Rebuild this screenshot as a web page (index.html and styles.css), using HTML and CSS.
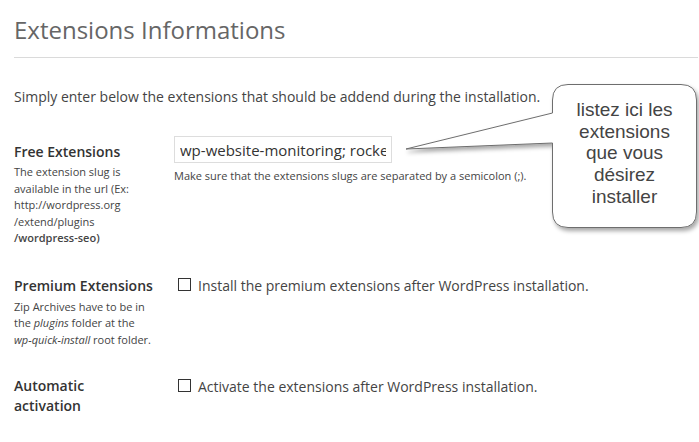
FILE: index.html
```html
<!DOCTYPE html>
<html lang="en">
<head>
<meta charset="UTF-8">
<meta name="viewport" content="width=device-width, initial-scale=1.0">
<title>Extensions Informations</title>
<link rel="stylesheet" href="styles.css">
</head>
<body>

<div class="page">
  <h1 class="title">Extensions Informations</h1>
  <p class="intro">Simply enter below the extensions that should be addend during the installation.</p>

  <div class="field-row">
    <div class="field-label">
      <label for="plugins">Free Extensions</label>
      <p class="desc">The extension slug is available in the url (Ex: http://wordpress.org /extend/plugins <strong class="nowrap">/wordpress-seo)</strong></p>
    </div>
    <div class="field-control">
      <input id="plugins" class="text-input" type="text" value="wp-website-monitoring; rocket-lazy-load">
      <p class="help">Make sure that the extensions slugs are separated by a semicolon (;).</p>
    </div>
  </div>

  <div class="field-row">
    <div class="field-label">
      <label>Premium Extensions</label>
      <p class="desc desc-spaced">Zip Archives have to be in the <em>plugins</em> folder at the <em class="nowrap">wp-quick-install</em> root folder.</p>
    </div>
    <div class="field-control check-control">
      <label class="check"><span class="box"></span>Install the premium extensions after WordPress installation.</label>
    </div>
  </div>

  <div class="field-row">
    <div class="field-label">
      <label class="narrow">Automatic activation</label>
    </div>
    <div class="field-control check-control">
      <label class="check"><span class="box"></span>Activate the extensions after WordPress installation.</label>
    </div>
  </div>

  <!-- bulle d'annotation posée sur la capture -->
  <div class="callout">
    <svg width="299" height="160" viewBox="0 0 299 160">
      <defs>
        <filter id="shadow" x="-10%" y="-10%" width="130%" height="130%">
          <feDropShadow dx="2" dy="3" stdDeviation="2" flood-color="#000" flood-opacity="0.35"/>
        </filter>
      </defs>
      <path d="M168 4.5 H281 Q296.5 4.5 296.5 20 V132 Q296.5 147.5 281 147.5 H168 Q152.5 147.5 152.5 132 V63 L6 69 L152.5 33 V20 Q152.5 4.5 168 4.5 Z"
            fill="#fff" stroke="#6e6e6e" stroke-width="1" filter="url(#shadow)"/>
    </svg>
    <div class="callout-text">listez ici les<br>extensions<br>que vous<br>désirez<br>installer</div>
  </div>
</div>

</body>
</html>
```

FILE: styles.css
```css
body {
  margin: 0;
  background: #fff;
  font-family: "Open Sans", sans-serif;
  color: #444;
}
.page {
  position: relative;
  padding: 0 1px 0 14px;
}
.title {
  margin: 0;
  padding: 14px 0 11px;
  font-size: 24px;
  font-weight: 400;
  line-height: 32px;
  color: #666;
  border-bottom: 1px solid #dadada;
}
.intro {
  margin: 28px 0 29px;
  font-size: 14px;
  line-height: 21px;
}
.field-row {
  display: grid;
  grid-template-columns: 160px 1fr;
  margin-bottom: 23px;
}
.field-label {
  padding-top: 5px;
}
.field-label label {
  display: block;
  font-size: 14px;
  font-weight: 600;
  line-height: 21px;
  color: #333;
}
.field-label .narrow {
  width: 90px;
  line-height: 20px;
}
.desc {
  margin: 2px 0 0;
  font-size: 11px;
  line-height: 16.5px;
  color: #444;
  width: 140px;
}
.desc-spaced {
  margin-top: 3px;
}
.desc strong {
  font-weight: 600;
}
.nowrap {
  white-space: nowrap;
}
.text-input {
  display: block;
  box-sizing: border-box;
  width: 218px;
  height: 27px;
  margin: 0;
  padding: 0 5px;
  border: 1px solid #ddd;
  font-family: "Open Sans", sans-serif;
  font-size: 15px;
  color: #333;
  outline: none;
}
.help {
  margin: 5px 0 0;
  font-size: 11px;
  line-height: 16px;
  color: #444;
}
.check-control {
  padding-top: 5px;
  padding-left: 4px;
}
.check {
  display: flex;
  align-items: flex-start;
  font-size: 14px;
  line-height: 21px;
  color: #444;
}
.box {
  flex: none;
  width: 11px;
  height: 11px;
  margin: 3px 7px 0 0;
  border: 1px solid #333;
  background: #fff;
}
.callout {
  position: absolute;
  left: 400px;
  top: 80px;
  width: 299px;
  height: 160px;
}
.callout svg {
  display: block;
}
.callout-text {
  position: absolute;
  left: 152px;
  top: 19px;
  width: 145px;
  text-align: center;
  font-family: "Liberation Sans", Arial, sans-serif;
  font-size: 19px;
  line-height: 21.7px;
  color: #444;
}
```
